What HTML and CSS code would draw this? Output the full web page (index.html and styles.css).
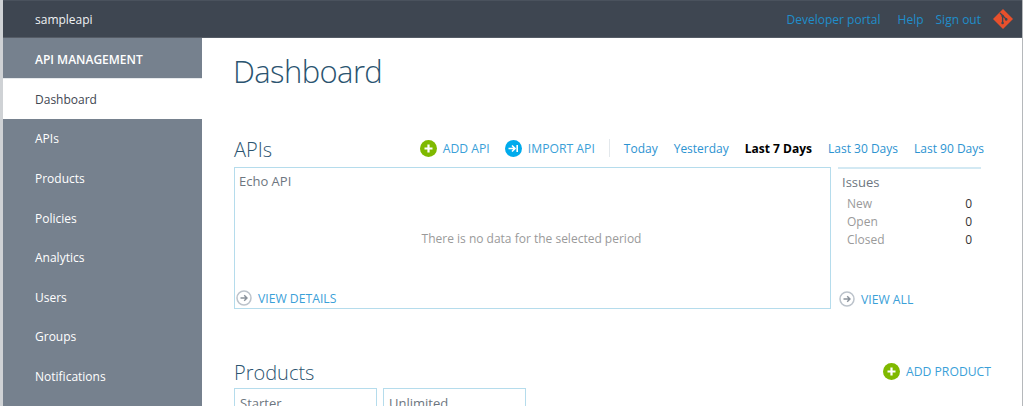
FILE: index.html
```html
<!DOCTYPE html>
<html lang="en">
<head>
<meta charset="utf-8">
<title>Dashboard</title>
<link rel="stylesheet" href="styles.css">
</head>
<body>
<div class="window">
  <header class="topbar">
    <span class="brand">sampleapi</span>
    <nav class="toplinks">
      <a class="toplink portal">Developer portal</a>
      <a class="toplink help">Help</a>
      <a class="toplink signout">Sign out</a>
      <svg class="gitlogo" viewBox="0 0 20 20" width="20" height="20"><path fill="#e8502c" d="M10 0l10 10-10 10L0 10z"/><path stroke="#3e4651" stroke-width="1.3" fill="none" d="M7 4l6.5 6.5M9.6 7v6.5"/><circle cx="9.6" cy="7" r="1.2" fill="#3e4651"/><circle cx="9.6" cy="14" r="1.3" fill="#3e4651"/><circle cx="13.2" cy="10.4" r="1.3" fill="#3e4651"/></svg>
    </nav>
  </header>
  <div class="body">
    <aside class="sidebar">
      <div class="side-head">API MANAGEMENT</div>
      <a class="side-item active">Dashboard</a>
      <a class="side-item">APIs</a>
      <a class="side-item">Products</a>
      <a class="side-item">Policies</a>
      <a class="side-item">Analytics</a>
      <a class="side-item">Users</a>
      <a class="side-item">Groups</a>
      <a class="side-item">Notifications</a>
    </aside>
    <main class="main">
      <h1 class="title">Dashboard</h1>
      <section class="apis">
        <div class="section-head">
          <h2 class="section-title api-title">APIs</h2>
          <div class="actions">
            <a class="action"><svg class="ico" viewBox="0 0 17 17" width="17" height="17"><circle cx="8.5" cy="8.5" r="8.5" fill="#7fb900"/><path d="M8.5 4.5v8M4.5 8.5h8" stroke="#fff" stroke-width="2.2"/></svg>ADD API</a>
            <a class="action"><svg class="ico" viewBox="0 0 17 17" width="17" height="17"><circle cx="8.5" cy="8.5" r="8.5" fill="#00abec"/><path d="M3.5 8.5h6M7 5.5l3 3-3 3M12.2 5v7" stroke="#fff" stroke-width="1.6" fill="none"/></svg>IMPORT API</a>
            <span class="divider"></span>
            <a class="range">Today</a>
            <a class="range">Yesterday</a>
            <a class="range current">Last 7 Days</a>
            <a class="range">Last 30 Days</a>
            <a class="range">Last 90 Days</a>
          </div>
        </div>
        <div class="panels">
          <div class="chart">
            <div class="chart-name">Echo API</div>
            <div class="empty">There is no data for the selected period</div>
            <a class="more"><svg class="more-ico" viewBox="0 0 16 16" width="16" height="16"><circle cx="8" cy="8" r="7" fill="none" stroke="#bcc3cb" stroke-width="1.5"/><path d="M4.5 8h6.5M8.2 5.2L11 8l-2.8 2.8" fill="none" stroke="#8a929b" stroke-width="1.4"/></svg>VIEW DETAILS</a>
          </div>
          <div class="issues">
            <div class="issues-title">Issues</div>
            <dl class="stats">
              <div class="stat"><dt>New</dt><dd>0</dd></div>
              <div class="stat"><dt>Open</dt><dd>0</dd></div>
              <div class="stat"><dt>Closed</dt><dd>0</dd></div>
            </dl>
            <a class="more"><svg class="more-ico" viewBox="0 0 16 16" width="16" height="16"><circle cx="8" cy="8" r="7" fill="none" stroke="#bcc3cb" stroke-width="1.5"/><path d="M4.5 8h6.5M8.2 5.2L11 8l-2.8 2.8" fill="none" stroke="#8a929b" stroke-width="1.4"/></svg>VIEW ALL</a>
          </div>
        </div>
      </section>
      <section class="products">
        <div class="products-head">
          <h2 class="section-title">Products</h2>
          <a class="action add-product"><svg class="ico" viewBox="0 0 17 17" width="17" height="17"><circle cx="8.5" cy="8.5" r="8.5" fill="#7fb900"/><path d="M8.5 4.5v8M4.5 8.5h8" stroke="#fff" stroke-width="2.2"/></svg>ADD PRODUCT</a>
        </div>
        <div class="cards">
          <div class="card">Starter</div>
          <div class="card">Unlimited</div>
        </div>
      </section>
    </main>
  </div>
</div>
</body>
</html>
```
FILE: styles.css
```css
* { box-sizing: border-box; }
html, body { margin: 0; height: 100%; overflow: hidden; background: #fff; }
body { font-family: "Open Sans", "Noto Sans", sans-serif; font-size: 12px; }
.window {
  height: 406px;
  margin-right: 1px;
  border-left: 3px solid #cfd2d5;
  border-right: 1px solid #b5b8bb;
  display: flex;
  flex-direction: column;
  overflow: hidden;
}
.topbar {
  height: 38px;
  flex: none;
  background: #3e4651;
  border-top: 1px solid #4a525d;
  border-bottom: 1px solid #555c66;
  display: flex;
  align-items: center;
  justify-content: space-between;
  padding: 0 9px 0 32px;
}
.brand { color: #f0f2f4; font-size: 12px; }
.toplinks { display: flex; align-items: center; }
.toplink { color: #1f8ecb; font-size: 12px; }
.help { margin-left: 17px; }
.signout { margin-left: 12px; }
.gitlogo { margin-left: 12px; }
.body { flex: 1; display: flex; min-height: 0; }
.sidebar { width: 199px; flex: none; background: #76818e; }
.side-head {
  height: 41px;
  display: flex;
  align-items: center;
  padding: 3px 0 0 32px;
  color: #fff;
  font-size: 12px;
  font-weight: 600;
  border-bottom: 1px solid #e6e9ec;
}
.side-item {
  height: 39.6px;
  display: flex;
  align-items: center;
  padding: 1px 0 0 32px;
  color: #fff;
  font-size: 12px;
}
.active { background: #fff; color: #3e4651; }
.main { flex: 1; min-width: 0; padding: 0 0 0 32px; }
.title {
  margin: 0 0 0 -1px;
  padding-top: 12px;
  height: 87px;
  font-size: 31px;
  letter-spacing: -0.6px;
  line-height: 42px;
  font-weight: 300;
  color: #2b5470;
}
.section-title { margin: 0; font-size: 20px; line-height: 26px; font-weight: 300; color: #2b5470; }
.api-title { margin-bottom: 4px; }
.section-head { display: flex; align-items: flex-end; justify-content: space-between; height: 42px; }
.actions { display: flex; align-items: center; height: 24px; margin-bottom: 7px; margin-right: 38px; }
.action { display: flex; align-items: center; color: #3aa0d8; font-size: 12.2px; }
.actions .action { margin-right: 15px; }
.actions .action + .action { margin-right: 14px; }
.add-product { margin-bottom: 4px; }
.ico { margin-right: 6px; flex: none; }
.divider { width: 1px; height: 18px; background: #e3e8ec; margin-right: 14px; }
.range { color: #2c93d1; font-size: 12px; margin-right: 16px; }
.range:last-child { margin-right: 0; }
.current { color: #000; font-weight: 700; }
.panels { display: flex; height: 142px; }
.chart {
  width: 597px;
  border: 1px solid #b5dcec;
  display: flex;
  flex-direction: column;
  padding: 4px 0 0 4px;
}
.chart-name { color: #6d7680; font-size: 13px; }
.empty { flex: 1; display: flex; align-items: center; justify-content: center; color: #9a9a9a; font-size: 12px; padding: 0 6px 2px 0; }
.more { display: flex; align-items: center; color: #3aa0d8; font-size: 12.2px; height: 20px; margin-left: -3px; }
.more-ico { margin-right: 6px; flex: none; }
.issues {
  width: 143px;
  margin-left: 7px;
  border-top: 2px solid #d3e9f3;
  display: flex;
  flex-direction: column;
  padding: 4px 0 0 4px;
}
.issues-title { color: #6d7680; font-size: 13px; }
.stats { margin: 3px 0 0; flex: 1; padding: 0 9px 0 5px; }
.stat { display: flex; justify-content: space-between; height: 18px; align-items: center; color: #9a9a9a; }
.stat dd { margin: 0; color: #333; }
.products { margin-top: 49px; }
.products-head { display: flex; align-items: center; justify-content: space-between; height: 30px; margin-right: 31px; }
.cards { display: flex; gap: 6px; }
.card {
  width: 143px;
  height: 60px;
  border: 1px solid #b5dcec;
  padding: 5px 0 0 5px;
  color: #6d7680;
  font-size: 13px;
}
```
